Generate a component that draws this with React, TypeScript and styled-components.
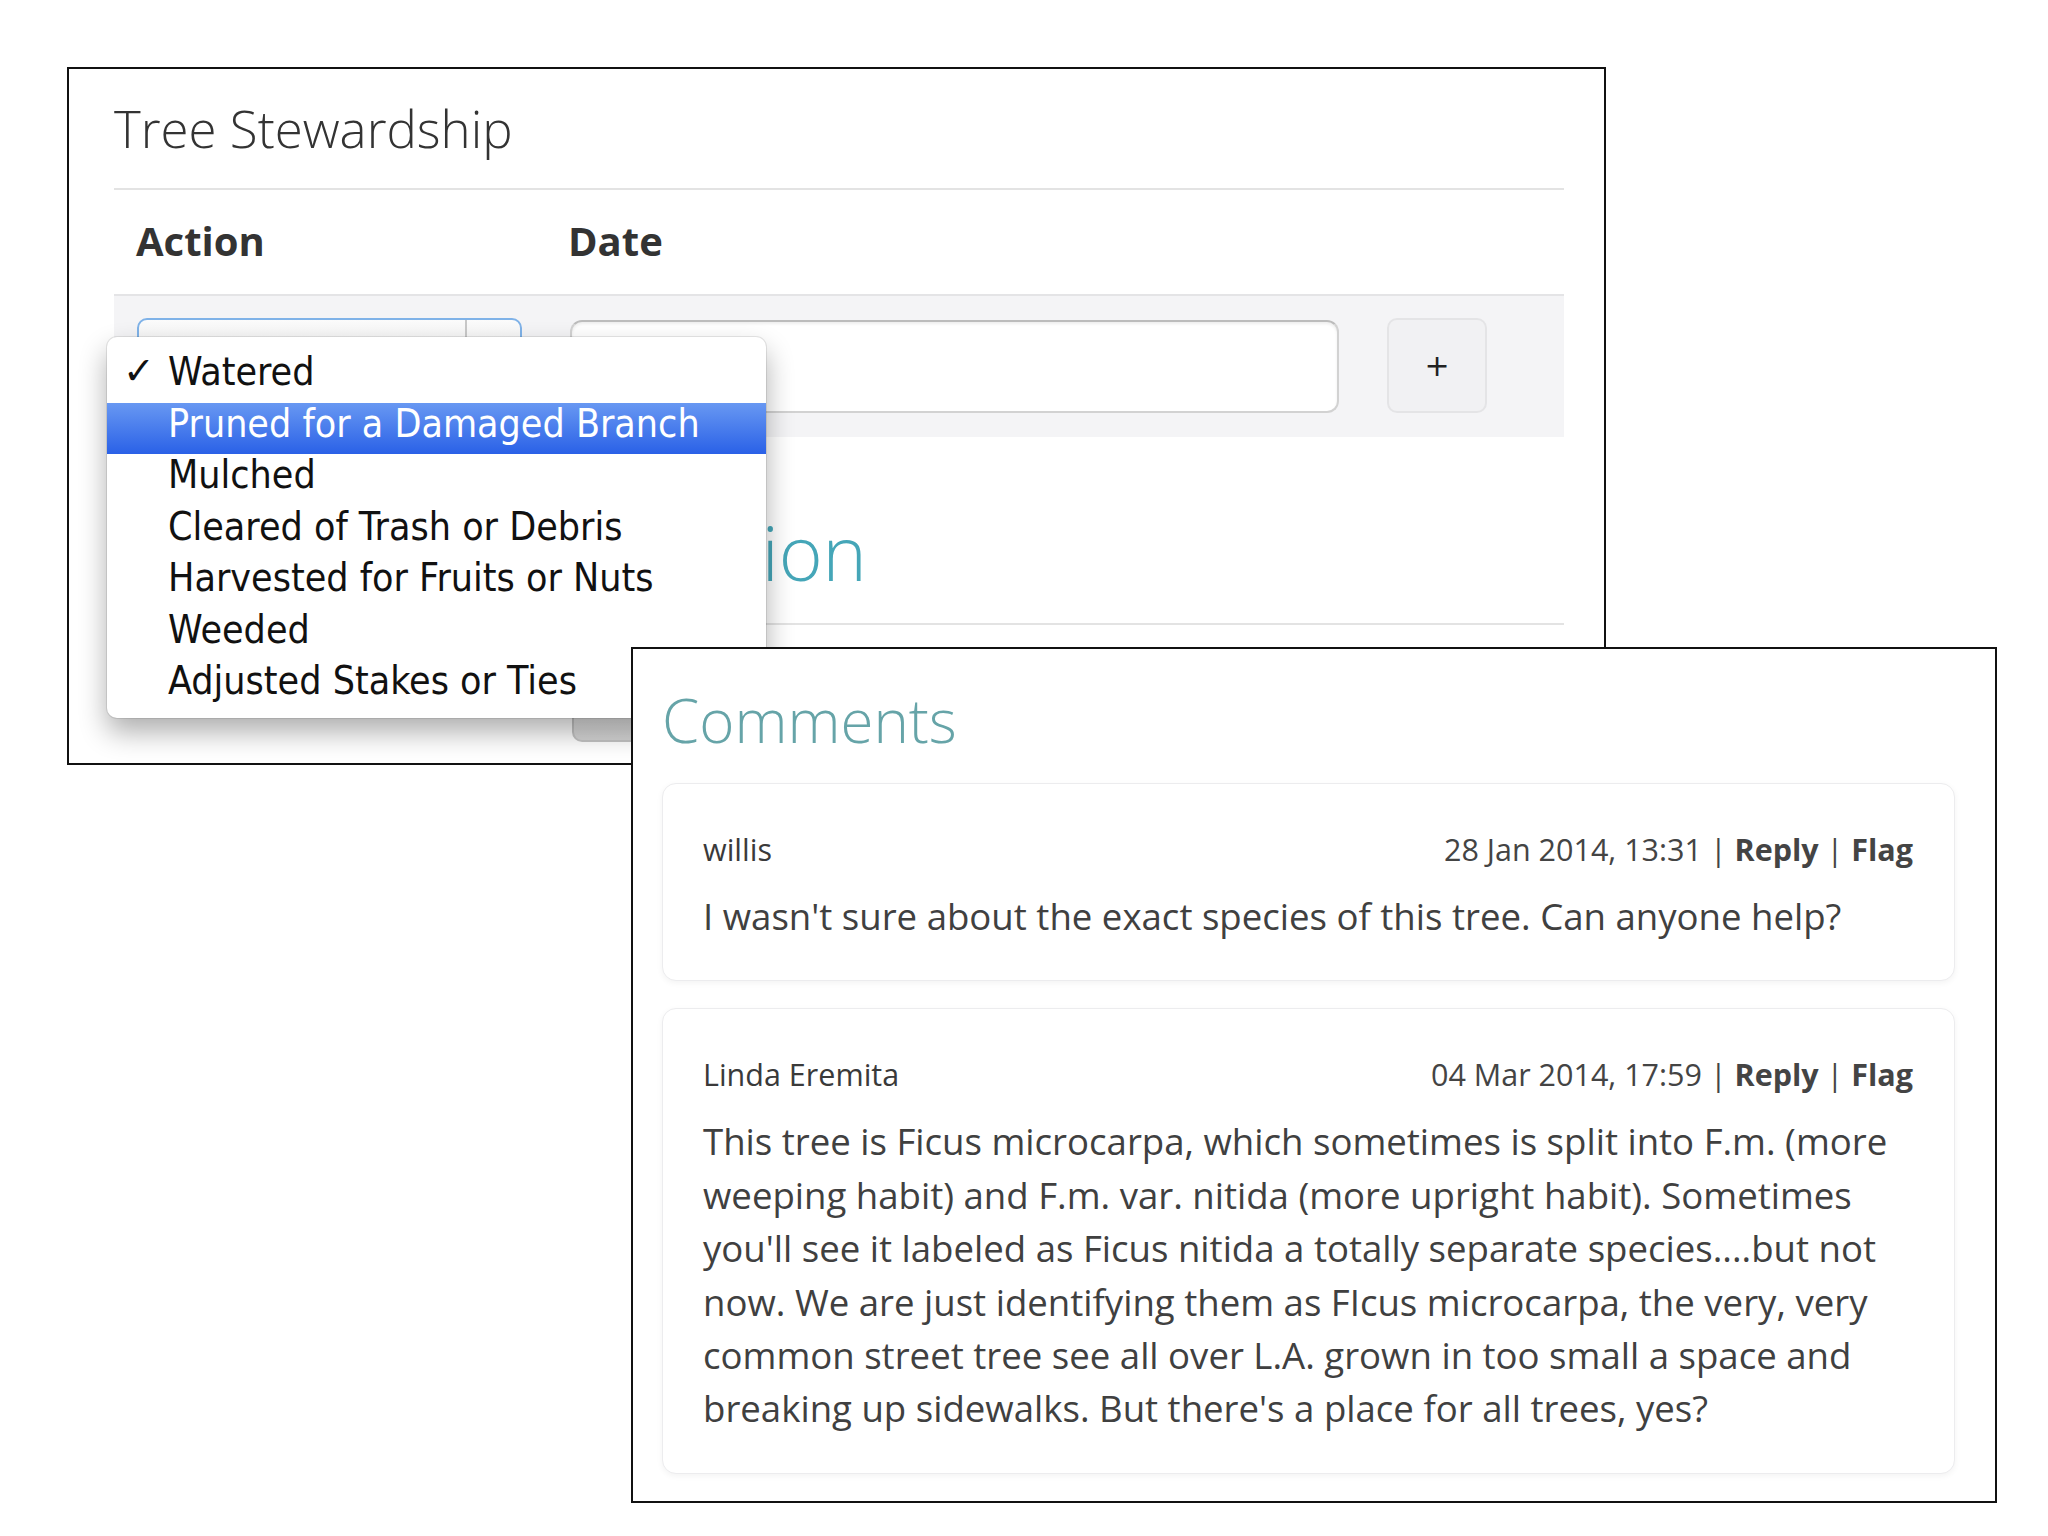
import React from "react"
import styled, { createGlobalStyle } from "styled-components"

const GlobalStyle = createGlobalStyle`
  html, body {
    margin: 0;
    padding: 0;
    background: #fff;
  }
  body {
    font-family: "Open Sans", "Liberation Sans", sans-serif;
    color: #333;
  }
`

const Desk = styled.div`
  position: relative;
  width: 2048px;
  height: 1536px;
  overflow: hidden;
  background: #fff;
`

const Window = styled.section<{ $left: number; $top: number; $width: number; $height: number }>`
  position: absolute;
  left: ${(p) => p.$left}px;
  top: ${(p) => p.$top}px;
  width: ${(p) => p.$width}px;
  height: ${(p) => p.$height}px;
  box-sizing: border-box;
  border: 2px solid #111;
  background: #fff;
`

const StewardshipWindow = styled(Window)`
  padding: 29px 40px 0 45px;
`

const Title = styled.h1`
  margin: 0 0 30px;
  font-weight: 300;
  font-size: 51px;
  line-height: 60px;
  color: #333;
`

const Rule = styled.div`
  height: 2px;
  background: #e3e3e3;
`

const HeaderRow = styled.div`
  display: grid;
  grid-template-columns: 432px 1fr;
  box-sizing: border-box;
  height: 106px;
  padding: 26px 0 0 22px;
  border-bottom: 2px solid #e4e4e6;
`

const HeaderCell = styled.div`
  font-weight: 700;
  font-size: 40px;
  line-height: 50px;
  color: #333;
`

const ActionRow = styled.div`
  display: flex;
  align-items: flex-start;
  gap: 48px;
  padding: 22px 0 24px 23px;
  background: #f4f4f6;
`

const SelectBox = styled.div`
  display: flex;
  box-sizing: border-box;
  width: 385px;
  height: 95px;
  border: 2px solid #7fb2e8;
  border-radius: 10px;
  background: linear-gradient(#fbfbfb, #e2e2e2);
`

const SelectArrow = styled.div`
  margin-left: auto;
  width: 53px;
  border-left: 2px solid #c8c8c8;
`

const DateInput = styled.div`
  box-sizing: border-box;
  width: 769px;
  height: 93px;
  margin-top: 2px;
  border: 2px solid #d2d2d2;
  border-top-color: #bcbcbc;
  border-radius: 12px;
  background: #fff;
  box-shadow: inset 0 2px 3px rgba(0, 0, 0, 0.07);
`

const PlusButton = styled.button`
  box-sizing: border-box;
  width: 100px;
  height: 95px;
  padding: 0;
  border: 2px solid #e4e4e6;
  border-radius: 10px;
  background: #f1f1f3;
  font-family: "DejaVu Sans", sans-serif;
  font-size: 30px;
  color: #222;
`

const SectionHeading = styled.h2`
  margin: 75px 0 0;
  padding-bottom: 31px;
  border-bottom: 2px solid #e3e3e3;
  font-weight: 300;
  font-size: 75px;
  line-height: 80px;
  color: #45a6b8;
  white-space: nowrap;
`

const PushButton = styled.div`
  box-sizing: border-box;
  width: 320px;
  height: 53px;
  margin: 64px 0 0 458px;
  border: 2px solid #c4c4c4;
  border-radius: 10px;
  background: linear-gradient(#f6f6f6, #d4d4d4);
`

const Menu = styled.ul`
  position: absolute;
  left: 38px;
  top: 268px;
  width: 659px;
  margin: 0;
  padding: 14px 0 6px;
  list-style: none;
  border-radius: 10px;
  background: #fff;
  box-shadow: 0 14px 28px rgba(0, 0, 0, 0.32), 0 0 0 1px rgba(0, 0, 0, 0.09);
  font-family: "DejaVu Sans Condensed", "DejaVu Sans", sans-serif;
  font-size: 39px;
`

const MenuItem = styled.li<{ $active?: boolean }>`
  display: flex;
  height: 51.5px;
  box-sizing: border-box;
  padding: 0 0 10px 16px;
  line-height: 41.5px;
  white-space: nowrap;
  color: ${(p) => (p.$active ? "#fff" : "#111")};
  background: ${(p) => (p.$active ? "linear-gradient(#6898f2, #2a61e7)" : "transparent")};
`

const CheckSlot = styled.span`
  width: 45px;
  font-family: "DejaVu Sans", sans-serif;
  font-size: 38px;
  font-weight: 700;
`

const CommentsWindow = styled(Window)`
  padding: 39px 40px 0 29px;
`

const CommentsTitle = styled.h2`
  margin: 0 0 31px 0;
  font-weight: 300;
  font-size: 60px;
  line-height: 64px;
  color: #66a4a8;
`

const CardList = styled.div`
  display: flex;
  flex-direction: column;
  gap: 27px;
`

const Card = styled.article`
  padding: 45px 41px 37px 40px;
  border: 1px solid #ececee;
  border-radius: 14px;
  background: #fff;
  box-shadow: 0 2px 6px rgba(0, 0, 0, 0.05);
`

const MetaRow = styled.div`
  display: flex;
  justify-content: space-between;
  font-size: 30.5px;
  line-height: 40px;
  color: #444;
`

const Author = styled.span`
  color: #3a3a3a;
`

const Strong = styled.b`
  font-weight: 700;
  color: #444;
`

const Body = styled.p`
  margin: 21px 0 0;
  font-size: 36.6px;
  line-height: 53.4px;
  color: #404040;
  white-space: nowrap;
`

const actions = [
  "Watered",
  "Pruned for a Damaged Branch",
  "Mulched",
  "Cleared of Trash or Debris",
  "Harvested for Fruits or Nuts",
  "Weeded",
  "Adjusted Stakes or Ties",
]

const comments = [
  {
    author: "willis",
    date: "28 Jan 2014, 13:31",
    lines: ["I wasn't sure about the exact species of this tree. Can anyone help?"],
  },
  {
    author: "Linda Eremita",
    date: "04 Mar 2014, 17:59",
    lines: [
      "This tree is Ficus microcarpa, which sometimes is split into F.m. (more",
      "weeping habit) and F.m. var. nitida (more upright habit). Sometimes",
      "you'll see it labeled as Ficus nitida a totally separate species....but not",
      "now. We are just identifying them as FIcus microcarpa, the very, very",
      "common street tree see all over L.A. grown in too small a space and",
      "breaking up sidewalks. But there's a place for all trees, yes?",
    ],
  },
]

export default function App() {
  return (
    <>
      <GlobalStyle />
      <Desk>
        <StewardshipWindow $left={67} $top={67} $width={1539} $height={698}>
          <Title>Tree Stewardship</Title>
          <Rule />
          <HeaderRow>
            <HeaderCell>Action</HeaderCell>
            <HeaderCell>Date</HeaderCell>
          </HeaderRow>
          <ActionRow>
            <SelectBox>
              <SelectArrow />
            </SelectBox>
            <DateInput />
            <PlusButton>+</PlusButton>
          </ActionRow>
          <SectionHeading>Additional Information</SectionHeading>
          <PushButton />

          <Menu>
            {actions.map((a, i) => (
              <MenuItem key={a} $active={i === 1}>
                <CheckSlot>{i === 0 ? "✓" : ""}</CheckSlot>
                {a}
              </MenuItem>
            ))}
          </Menu>
        </StewardshipWindow>

        <CommentsWindow $left={631} $top={647} $width={1366} $height={856}>
          <CommentsTitle>Comments</CommentsTitle>
          <CardList>
            {comments.map((c) => (
              <Card key={c.author}>
                <MetaRow>
                  <Author>{c.author}</Author>
                  <span>
                    {c.date} | <Strong>Reply</Strong> | <Strong>Flag</Strong>
                  </span>
                </MetaRow>
                <Body>
                  {c.lines.map((l, i) => (
                    <React.Fragment key={i}>
                      {i > 0 && <br />}
                      {l}
                    </React.Fragment>
                  ))}
                </Body>
              </Card>
            ))}
          </CardList>
        </CommentsWindow>
      </Desk>
    </>
  )
}
